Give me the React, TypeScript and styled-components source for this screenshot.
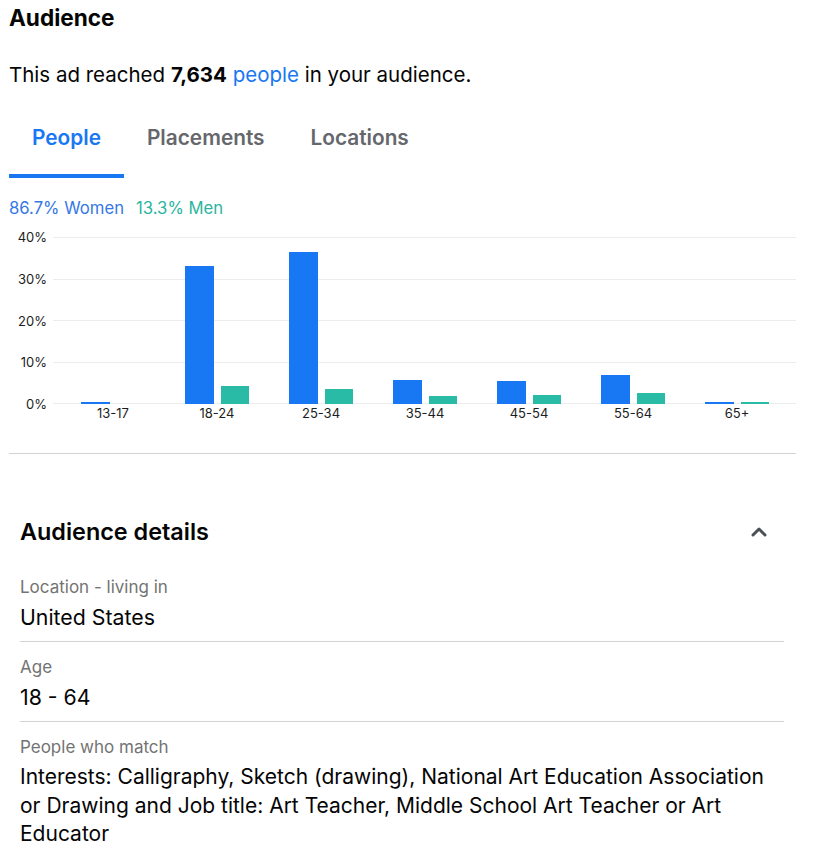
import React from 'react'
import styled, { createGlobalStyle } from 'styled-components'

const GlobalStyle = createGlobalStyle`
  html, body {
    margin: 0;
    padding: 0;
    background: #fff;
  }
  body {
    font-family: Inter, "Noto Sans", "Liberation Sans", sans-serif;
    color: #050505;
    -webkit-font-smoothing: antialiased;
  }
`

const BLUE = '#1877f2'
const GREEN = '#2abba7'
const PX_PER_PCT = 4.15

const Page = styled.div`
  width: 816px;
  background: #fff;
`

const Top = styled.section`
  padding: 5px 20px 0 9px;
`

const Title = styled.h1`
  margin: 0;
  font-size: 22.6px;
  line-height: 26px;
  font-weight: 700;
`

const Reach = styled.p`
  margin: 32px 0 0;
  font-size: 20.5px;
  line-height: 24px;
  b { font-weight: 700; }
  a { color: ${BLUE}; text-decoration: none; }
`

const Tabs = styled.div`
  display: flex;
  margin-top: 26px;
`

const Tab = styled.div<{ $active?: boolean }>`
  padding: 13px 23px 24px;
  font-size: 20.8px;
  line-height: 24px;
  font-weight: 600;
  color: ${p => (p.$active ? BLUE : '#65676b')};
  border-bottom: 4px solid ${p => (p.$active ? BLUE : 'transparent')};
`

const Split = styled.div`
  margin-top: 20px;
  font-size: 16.7px;
  line-height: 20px;
  display: flex;
  gap: 12px;
`

const Share = styled.span<{ $color: string }>`
  color: ${p => p.$color};
`

const Chart = styled.div`
  display: flex;
  margin-top: 11px;
`

const YAxis = styled.div`
  width: 38px;
  height: 183px;
  display: flex;
  flex-direction: column;
  justify-content: space-between;
  align-items: flex-end;
  font-size: 13px;
  line-height: 16px;
  color: #1c1e21;
  margin-right: 6px;
`

const PlotColumn = styled.div`
  flex: 1;
  padding-top: 8px;
`

const Plot = styled.div`
  height: 167px;
  display: flex;
  padding: 0 7px 0 8px;
  background: repeating-linear-gradient(
    to bottom,
    #ececec 0,
    #ececec 1px,
    transparent 1px,
    transparent 41.5px
  );
`

const Group = styled.div`
  flex: 1;
  display: flex;
  justify-content: center;
  align-items: flex-end;
  gap: 7px;
`

const Bar = styled.div<{ $color: string; $w: number }>`
  width: ${p => p.$w}px;
  background: ${p => p.$color};
`

const XAxis = styled.div`
  display: flex;
  padding: 1px 7px 0 8px;
`

const XLabel = styled.div`
  flex: 1;
  text-align: center;
  font-size: 13px;
  line-height: 16px;
  color: #1c1e21;
`

const Divider = styled.hr<{ $top: number }>`
  margin: ${p => p.$top}px 0 0;
  border: 0;
  height: 1px;
  background: #d2d3d5;
`

const Details = styled.section`
  padding: 0 32px 30px 20px;
`

const DetailsHead = styled.div`
  margin-top: 64px;
  display: flex;
  align-items: center;
  justify-content: space-between;
`

const DetailsTitle = styled.h2`
  margin: 0;
  font-size: 23.4px;
  line-height: 28px;
  font-weight: 600;
`

const Toggle = styled.button`
  border: 0;
  background: none;
  padding: 0;
  margin-right: 13px;
  width: 24px;
  height: 24px;
  display: flex;
  align-items: center;
  justify-content: center;
`

const Field = styled.div<{ $first?: boolean }>`
  padding-top: ${p => (p.$first ? 31 : 15)}px;
`

const Label = styled.div`
  font-size: 17px;
  line-height: 20px;
  color: #737373;
`

const Value = styled.div`
  margin-top: 8px;
  font-size: 21.3px;
  line-height: 24px;
`

const LongValue = styled.div`
  margin-top: 6px;
  font-size: 21px;
  line-height: 28.5px;
`

const ages = [
  { label: '13-17', women: 0.3, men: 0 },
  { label: '18-24', women: 33.1, men: 4.2 },
  { label: '25-34', women: 36.5, men: 3.4 },
  { label: '35-44', women: 5.6, men: 1.8 },
  { label: '45-54', women: 5.4, men: 2.0 },
  { label: '55-64', women: 6.8, men: 2.6 },
  { label: '65+', women: 0.4, men: 0.3 },
]

const ChevronUp = () => (
  <svg width="16" height="10" viewBox="0 0 16 10">
    <path d="M2 8 L8 2 L14 8" fill="none" stroke="#4b4f56" strokeWidth="3" strokeLinecap="round" strokeLinejoin="round" />
  </svg>
)

export default function App() {
  return (
    <Page>
      <GlobalStyle />
      <Top>
        <Title>Audience</Title>
        <Reach>
          This ad reached <b>7,634</b> <a href="#">people</a> in your audience.
        </Reach>
        <Tabs>
          <Tab $active>People</Tab>
          <Tab>Placements</Tab>
          <Tab>Locations</Tab>
        </Tabs>
        <Split>
          <Share $color="#3578e5">86.7% Women</Share>
          <Share $color="#2bb5a0">13.3% Men</Share>
        </Split>
        <Chart>
          <YAxis>
            <span>40%</span>
            <span>30%</span>
            <span>20%</span>
            <span>10%</span>
            <span>0%</span>
          </YAxis>
          <PlotColumn>
            <Plot>
              {ages.map(a => (
                <Group key={a.label}>
                  <Bar $color={BLUE} $w={29} style={{ height: a.women * PX_PER_PCT + 0.5 }} />
                  <Bar $color={GREEN} $w={28} style={{ height: a.men > 0 ? a.men * PX_PER_PCT + 0.5 : 0 }} />
                </Group>
              ))}
            </Plot>
            <XAxis>
              {ages.map(a => (
                <XLabel key={a.label}>{a.label}</XLabel>
              ))}
            </XAxis>
          </PlotColumn>
        </Chart>
        <Divider $top={32} />
      </Top>
      <Details>
        <DetailsHead>
          <DetailsTitle>Audience details</DetailsTitle>
          <Toggle aria-label="Collapse">
            <ChevronUp />
          </Toggle>
        </DetailsHead>
        <Field $first>
          <Label>Location - living in</Label>
          <Value>United States</Value>
        </Field>
        <Divider $top={12} />
        <Field>
          <Label>Age</Label>
          <Value>18 - 64</Value>
        </Field>
        <Divider $top={12} />
        <Field>
          <Label>People who match</Label>
          <LongValue>
            Interests: Calligraphy, Sketch (drawing), National Art Education Association or Drawing and Job title: Art
            Teacher, Middle School Art Teacher or Art Educator
          </LongValue>
        </Field>
      </Details>
    </Page>
  )
}
